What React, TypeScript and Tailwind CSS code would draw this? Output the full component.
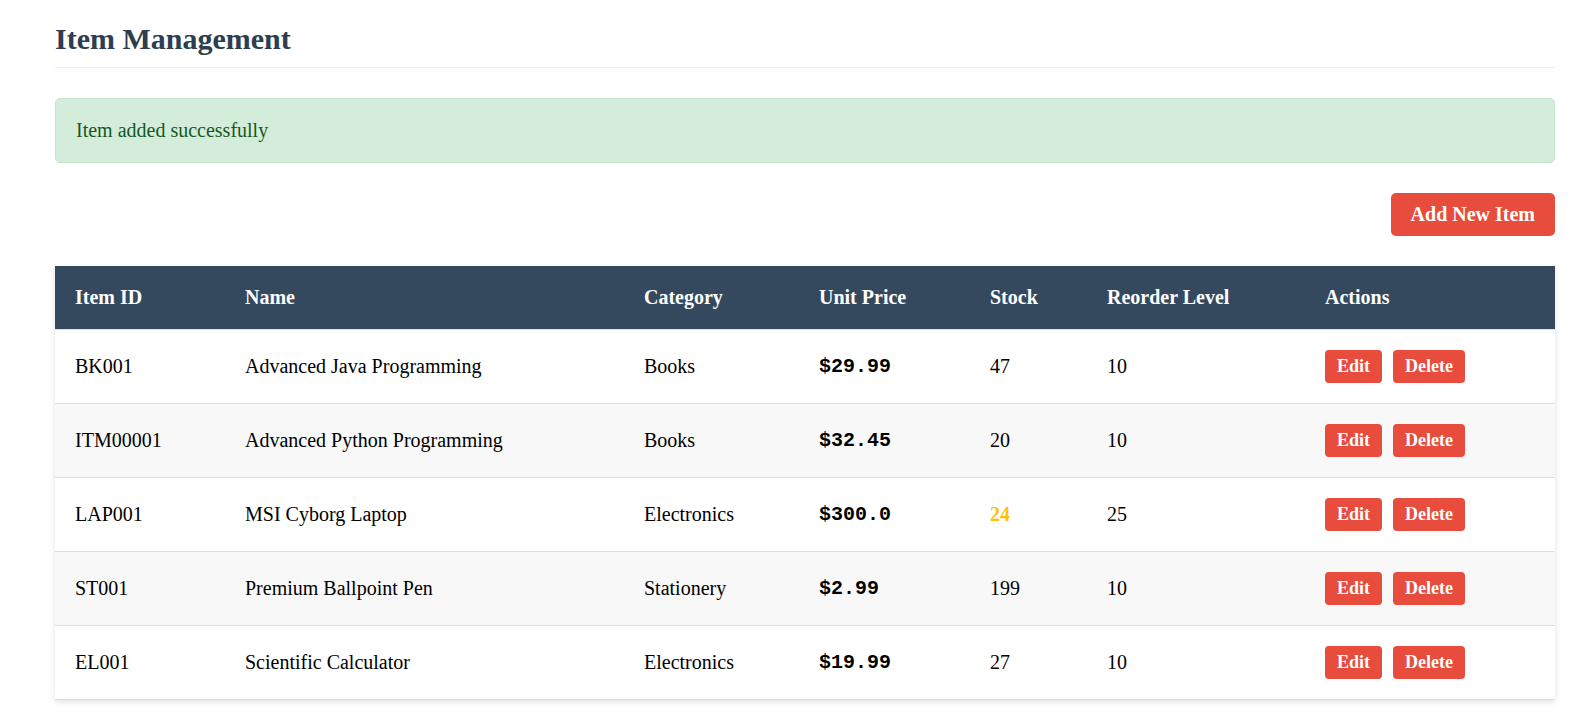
import React from 'react';

interface Item {
  id: string;
  name: string;
  category: string;
  price: string;
  stock: number;
  reorder: number;
}

const items: Item[] = [
  { id: 'BK001', name: 'Advanced Java Programming', category: 'Books', price: '$29.99', stock: 47, reorder: 10 },
  { id: 'ITM00001', name: 'Advanced Python Programming', category: 'Books', price: '$32.45', stock: 20, reorder: 10 },
  { id: 'LAP001', name: 'MSI Cyborg Laptop', category: 'Electronics', price: '$300.0', stock: 24, reorder: 25 },
  { id: 'ST001', name: 'Premium Ballpoint Pen', category: 'Stationery', price: '$2.99', stock: 199, reorder: 10 },
  { id: 'EL001', name: 'Scientific Calculator', category: 'Electronics', price: '$19.99', stock: 27, reorder: 10 },
];

const columns = [
  { label: 'Item ID', width: 'w-[170px]' },
  { label: 'Name', width: 'w-[399px]' },
  { label: 'Category', width: 'w-[175px]' },
  { label: 'Unit Price', width: 'w-[171px]' },
  { label: 'Stock', width: 'w-[117px]' },
  { label: 'Reorder Level', width: 'w-[218px]' },
  { label: 'Actions', width: 'w-[250px]' },
];

const App: React.FC = () => {
  return (
    <div className="min-h-screen bg-white pl-[55px] pt-[22px] pb-10 font-['Liberation_Serif',serif] text-black">
      <div className="w-[1500px]">
        <h1 className="text-[30px] font-bold leading-[33px] text-[#2c3e50] pb-[12px] border-b border-[#eeeeee] mb-[30px]">
          Item Management
        </h1>

        {/* Success alert */}
        <div className="bg-[#d4edda] border border-[#c3e6cb] text-[#155724] rounded-[5px] px-5 py-5 text-[20px] leading-[23px] mb-[30px]">
          Item added successfully
        </div>

        <div className="flex justify-end mb-[30px]">
          <button className="bg-[#e74c3c] text-white text-[20px] font-bold leading-[23px] px-5 py-[10px] rounded-[5px]">
            Add New Item
          </button>
        </div>

        <table className="w-[1500px] table-fixed border-collapse bg-white shadow-[0_2px_6px_rgba(0,0,0,0.12)]">
          <thead>
            <tr className="bg-[#34495e] text-white border-b border-[#dddddd]">
              {columns.map((c) => (
                <th key={c.label} className={`${c.width} text-left font-bold text-[20px] leading-[23px] px-5 py-5`}>
                  {c.label}
                </th>
              ))}
            </tr>
          </thead>
          <tbody>
            {items.map((item, i) => (
              <tr key={item.id} className={`border-b border-[#dddddd] ${i % 2 === 1 ? 'bg-[#f8f8f8]' : 'bg-white'}`}>
                <td className="px-5 py-5 text-[20px] leading-[23px] align-middle">{item.id}</td>
                <td className="px-5 py-5 text-[20px] leading-[23px] align-middle">{item.name}</td>
                <td className="px-5 py-5 text-[20px] leading-[23px] align-middle">{item.category}</td>
                <td className="px-5 py-5 text-[20px] leading-[23px] align-middle font-['Liberation_Mono',monospace] font-bold">
                  {item.price}
                </td>
                <td
                  className={
                    item.stock < item.reorder
                      ? 'px-5 py-5 text-[20px] leading-[23px] align-middle font-bold text-[#ffc107]'
                      : 'px-5 py-5 text-[20px] leading-[23px] align-middle'
                  }
                >
                  {item.stock}
                </td>
                <td className="px-5 py-5 text-[20px] leading-[23px] align-middle">{item.reorder}</td>
                <td className="px-5 py-5 align-middle">
                  <div className="flex h-[33px] items-center gap-[11px]">
                    <button className="bg-[#e74c3c] text-white text-[18px] font-bold leading-[21px] px-3 py-[6px] rounded-[4px]">
                      Edit
                    </button>
                    <button className="bg-[#e74c3c] text-white text-[18px] font-bold leading-[21px] px-3 py-[6px] rounded-[4px]">
                      Delete
                    </button>
                  </div>
                </td>
              </tr>
            ))}
          </tbody>
        </table>
      </div>
    </div>
  );
};

export default App;
